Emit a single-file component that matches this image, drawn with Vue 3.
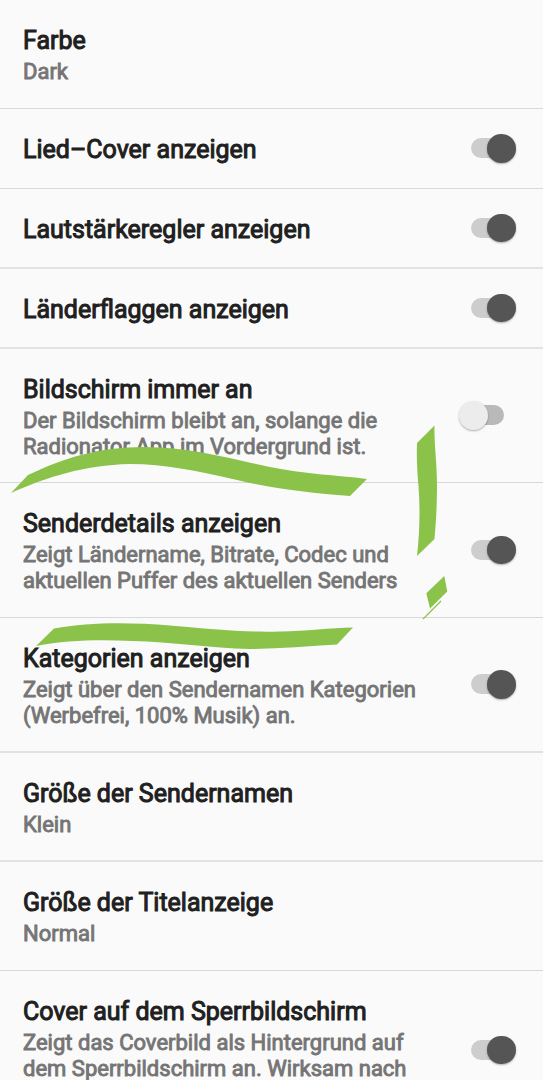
<script setup>
const rows = [
  { title: 'Farbe', lines: ['Dark'], size: 'double thin' },
  { title: 'Lied–Cover anzeigen', on: true, size: 'single thin' },
  { title: 'Lautstärkeregler anzeigen', on: true, size: 'single' },
  { title: 'Länderflaggen anzeigen', on: true, size: 'single' },
  { title: 'Bildschirm immer an', lines: ['Der Bildschirm bleibt an, solange die', 'Radionator App im Vordergrund ist.'], on: false, size: 'triple short thin' },
  { title: 'Senderdetails anzeigen', lines: ['Zeigt Ländername, Bitrate, Codec und', 'aktuellen Puffer des aktuellen Senders'], on: true, size: 'triple thin' },
  { title: 'Kategorien anzeigen', lines: ['Zeigt über den Sendernamen Kategorien', '(Werbefrei, 100% Musik) an.'], on: true, size: 'triple' },
  { title: 'Größe der Sendernamen', lines: ['Klein'], size: 'double' },
  { title: 'Größe der Titelanzeige', lines: ['Normal'], size: 'double thin' },
  { title: 'Cover auf dem Sperrbildschirm', lines: ['Zeigt das Coverbild als Hintergrund auf', 'dem Sperrbildschirm an. Wirksam nach'], on: true, size: 'last' },
]
</script>

<template>
  <main class="screen">
    <section v-for="row in rows" :key="row.title" class="row" :class="row.size">
      <div class="copy">
        <div class="title">{{ row.title }}</div>
        <div v-if="row.lines" class="details">
          <div v-for="line in row.lines" :key="line" class="summary">{{ line }}</div>
        </div>
      </div>
      <div v-if="row.on !== undefined" class="switch" :class="{ on: row.on }">
        <span class="track"></span>
        <span class="thumb"></span>
      </div>
    </section>
    <svg class="marks" width="543" height="1080" viewBox="0 0 543 1080" fill="#8bc34a">
      <path d="M11 493 L28 475 C64 458 98 447 144 447 C190 447 231 459 270 467 C303 474 336 475 367 479 L350 496 C311 493 274 489 237 480 C198 471 165 464 130 464 C84 465 47 477 11 493Z" />
      <path d="M36 646 L54 628.500 C88 622 130 622 170 625.500 C211 629 241 632.500 280 631.500 C307 631 330 628 353 627.500 L337 644.500 C308 646 278 649 249 649 C211 648 172 642 132 641 C99 639.500 67 640 36 646Z" />
      <path d="M417 443 L434.500 425.500 C434 444 437 463 437 486 C437 506 436 522 434.500 539 L417 556 C420 530 420 507 418.500 486 C417 470 416.500 456 417 443Z" />
      <path d="M426.300 593.300 L444.300 576 L447.300 591.500 L430 608.500Z" />
      <path d="M440.800 600.200 L441.200 601.800 L423.500 619.500 L422.500 618.700Z" />
    </svg>
  </main>
</template>

<style>
body { margin: 0; background: #fafafa; }
</style>

<style scoped>
.screen {
  position: relative;
  width: 543px;
  height: 1080px;
  overflow: hidden;
  background: #fafafa;
  font-family: Roboto, sans-serif;
}
.row {
  display: flex;
  justify-content: space-between;
  align-items: center;
  box-sizing: border-box;
  padding: 0 27.500px 0 23px;
  border-bottom: 2px solid #e2e2e2;
}
.single { height: 80px; }
.triple { height: 135px; }
.short { height: 134px; }
.double { height: 109px; }
.thin { border-bottom: 1px solid #d8d8d8; }
.last { height: 158px; border: 0; }
.copy {
  align-self: flex-start;
  padding-top: 26px;
  white-space: nowrap;
}
.title {
  font-size: 25px;
  line-height: 29.500px;
  color: #202020;
  -webkit-text-stroke: 1px #202020;
}
.details { padding-top: 3.500px; }
.summary {
  font-size: 22px;
  line-height: 26px;
  color: #757575;
  -webkit-text-stroke: 0.900px #757575;
}
.switch {
  position: relative;
  flex: none;
  width: 45px;
  height: 29px;
}
.switch:not(.on) { margin-right: 11.500px; }
.track {
  position: absolute;
  top: 4px;
  right: 0;
  width: 33px;
  height: 20px;
  border-radius: 10px;
  background: #b9b9b9;
}
.on .track { right: auto; left: 0; background: #cdcdcd; }
.thumb {
  position: absolute;
  top: 0;
  left: 0;
  width: 28.500px;
  height: 28.500px;
  border-radius: 50%;
  background: #ececec;
  box-shadow: 0 1px 2px rgba(0, 0, 0, 0.3);
}
.on .thumb { left: auto; right: 0; background: #555; }
.marks {
  position: absolute;
  top: 0;
  left: 0;
}
</style>
